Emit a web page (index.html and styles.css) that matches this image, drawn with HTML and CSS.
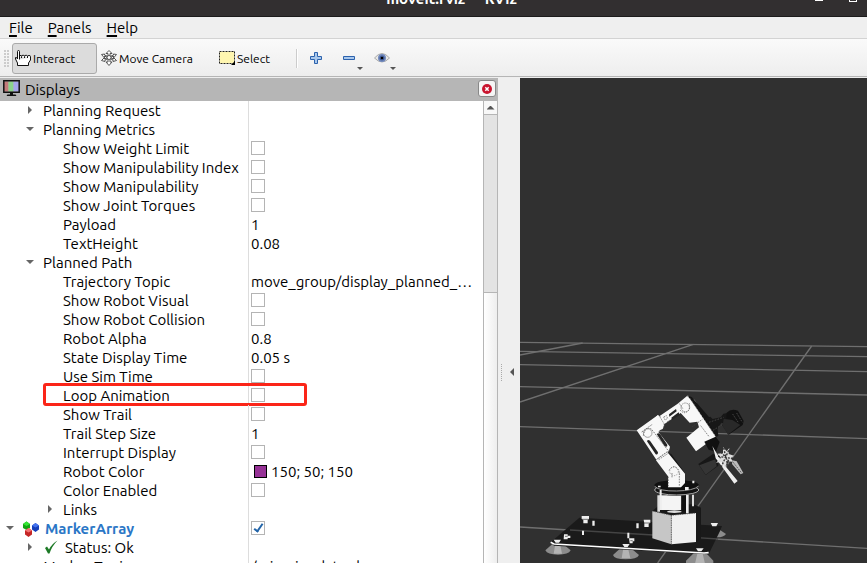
FILE: index.html
```html
<!DOCTYPE html>
<html lang="en">
<head>
    <meta charset="UTF-8">
    <meta name="viewport" content="width=device-width, initial-scale=1.0">
    <title>moveit.rviz* - RViz</title>
    <link rel="stylesheet" href="styles.css">
</head>
<body>
    <div class="window">
        <!-- Title bar -->
        <header class="title-bar">
            <h1 class="title">moveit.rviz* - RViz</h1>
            <button class="window-button minimize" aria-label="Minimize"></button>
            <button class="window-button maximize" aria-label="Maximize"></button>
        </header>

        <!-- Menu -->
        <nav class="menu-bar">
            <button class="menu"><u>F</u>ile</button>
            <button class="menu"><u>P</u>anels</button>
            <button class="menu"><u>H</u>elp</button>
        </nav>

        <!-- Toolbar -->
        <div class="toolbar">
            <span class="grip"></span>
            <button class="tool tool-interact active">
                <svg width="16" height="16" viewBox="0 0 16 16"><path d="M4.500 9.500V1.500q0-1-1-1t-1 1V9L1.500 7.500H.5V9l2 4v2.500h11V13l2-3V6.500q0-1-1.500-1t-1.500 1V8M4.500 5.500q2-.5 2 1V8M6.500 5.500q3-1 3 1V8M9.500 5.500q3-1 3 1V8" fill="#fff" stroke="#111"/></svg>
                <span>Interact</span>
            </button>
            <button class="tool tool-camera">
                <svg width="16" height="16" viewBox="0 0 16 16" fill="#fff" stroke="#555"><path d="M.5 4.500l3-.5v1l9 4V7.500l3 3-3.500 1V10l-8.500-4v2z"/><path d="M15.500 4.500l-3-.5v1l-9 4V7.500l-3 3 3.500 1V10l8.500-4v2z"/><path d="M8 .5L11 3.500H9V12h2l-3 3.500L5 12h2V3.500H5z"/><circle cx="8" cy="7.500" r="2"/></svg>
                <span>Move Camera</span>
            </button>
            <button class="tool tool-select">
                <svg width="16" height="14" viewBox="0 0 16 14"><path d="M.5.5h15v12H.5z" fill="#fff6b0" stroke="#222" stroke-dasharray="2 1"/><path d="M16 10v4h-4z" fill="#000"/></svg>
                <span>Select</span>
            </button>
            <span class="separator"></span>
            <button class="icon-tool" aria-label="Add tool">
                <svg width="12" height="12" viewBox="0 0 12 12"><path d="M4.500.5h3v4h4v3h-4v4h-3v-4h-4v-3h4z" fill="#a9c8ec" stroke="#2c62ad"/></svg>
            </button>
            <button class="icon-tool" aria-label="Remove tool">
                <svg width="12" height="12" viewBox="0 0 12 12"><path d="M.5 4.500h11v3H.5z" fill="#a9c8ec" stroke="#2c62ad"/></svg>
                <span class="drop-arrow"></span>
            </button>
            <button class="icon-tool" aria-label="Tool visibility">
                <svg width="16" height="12" viewBox="0 0 16 12"><path d="M.5 6Q8-3 15.500 6 8 14 .5 6z" fill="#e8e8e6" stroke="#aaa"/><circle cx="8" cy="6" r="4" fill="#7189bd"/><circle cx="8" cy="6" r="2.500" fill="#435d98"/><circle cx="8" cy="6" r="1.300" fill="#000"/></svg>
                <span class="drop-arrow"></span>
            </button>
        </div>

        <div class="workspace">
            <!-- Displays panel -->
            <section class="dock">
                <div class="dock-header">
                    <svg width="17" height="17" viewBox="0 0 17 17"><path d="M1 1.500h4.500v10H1z" fill="#c47b7b"/><path d="M5.500 1.500h5v10h-5z" fill="#8bd38b"/><path d="M10.500 1.500H16v10h-5.500z" fill="#a5a5ea"/><path d="M.8.800h15.400v11.400H.8z" fill="none" stroke="#111" stroke-width="1.500"/><path d="M7 12.500h3v2h2.500l1 1.500h-10l1-1.500H7z" fill="#111"/></svg>
                    <h2 class="dock-title">Displays</h2>
                    <button class="close-button" aria-label="Close">
                        <svg width="10" height="10" viewBox="0 0 10 10"><circle cx="5" cy="5" r="5" fill="#c9142e"/><path d="M3.300 3.300l3.400 3.400M6.700 3.300L3.300 6.700" stroke="#fff" stroke-width="1.500"/></svg>
                    </button>
                </div>
                <div class="tree-area">
                    <div class="tree-scroll">
                        <table class="tree">
                            <colgroup><col class="name-column"><col></colgroup>
                            <tbody>
                                <tr><td class="level-1"><span class="branch closed"></span>Planning Request</td><td></td></tr>
                                <tr><td class="level-1"><span class="branch"></span>Planning Metrics</td><td></td></tr>
                                <tr><td class="level-2"><label for="weight">Show Weight Limit</label></td><td><input type="checkbox" id="weight"></td></tr>
                                <tr><td class="level-2"><label for="manip-index">Show Manipulability Index</label></td><td><input type="checkbox" id="manip-index"></td></tr>
                                <tr><td class="level-2"><label for="manip">Show Manipulability</label></td><td><input type="checkbox" id="manip"></td></tr>
                                <tr><td class="level-2"><label for="torques">Show Joint Torques</label></td><td><input type="checkbox" id="torques"></td></tr>
                                <tr><td class="level-2">Payload</td><td>1</td></tr>
                                <tr><td class="level-2">TextHeight</td><td>0.08</td></tr>
                                <tr><td class="level-1"><span class="branch"></span>Planned Path</td><td></td></tr>
                                <tr><td class="level-2">Trajectory Topic</td><td>move_group/display_planned_…</td></tr>
                                <tr><td class="level-2"><label for="visual">Show Robot Visual</label></td><td><input type="checkbox" id="visual"></td></tr>
                                <tr><td class="level-2"><label for="collision">Show Robot Collision</label></td><td><input type="checkbox" id="collision"></td></tr>
                                <tr><td class="level-2">Robot Alpha</td><td>0.8</td></tr>
                                <tr><td class="level-2">State Display Time</td><td>0.05 s</td></tr>
                                <tr><td class="level-2"><label for="sim-time">Use Sim Time</label></td><td><input type="checkbox" id="sim-time"></td></tr>
                                <tr class="marked"><td class="level-2"><label for="loop">Loop Animation</label></td><td><input type="checkbox" id="loop"></td></tr>
                                <tr><td class="level-2"><label for="trail">Show Trail</label></td><td><input type="checkbox" id="trail"></td></tr>
                                <tr><td class="level-2">Trail Step Size</td><td>1</td></tr>
                                <tr><td class="level-2"><label for="interrupt">Interrupt Display</label></td><td><input type="checkbox" id="interrupt"></td></tr>
                                <tr><td class="level-2">Robot Color</td><td><span class="swatch"></span>150; 50; 150</td></tr>
                                <tr><td class="level-2"><label for="color">Color Enabled</label></td><td><input type="checkbox" id="color"></td></tr>
                                <tr><td class="level-2"><span class="branch closed"></span>Links</td><td></td></tr>
                                <tr>
                                    <td class="level-0"><span class="branch"></span><svg class="row-icon" width="18" height="16" viewBox="0 0 18 16"><path d="M0 3l3.500-2.500L7 3v4L3.500 9 0 7z" fill="#12a512"/><path d="M0 3l3.500-2.500L7 3 3.500 5z" fill="#35e535"/><path d="M9 4.500l3.500-2.500L16 4.500v4l-3.500 2.500L9 8.500z" fill="#173fba"/><path d="M9 4.500l3.500-2.500L16 4.500l-3.500 2z" fill="#4473ef"/><path d="M2 9.500L5.500 7 9 9.500v4L5.500 16 2 13.500z" fill="#c52626"/><path d="M2 9.500L5.500 7 9 9.500l-3.500 2z" fill="#f37373"/></svg><label class="display-name" for="markers">MarkerArray</label></td>
                                    <td><input type="checkbox" id="markers" checked></td>
                                </tr>
                                <tr><td class="level-1"><span class="branch closed"></span><svg class="row-icon status-icon" width="14" height="14" viewBox="0 0 14 14"><path d="M1 8l2-1.500 2 3Q8 3.500 13.500.5 8 6 5.500 13.500H4z" fill="#1d7a26"/></svg>Status: Ok</td><td></td></tr>
                                <tr><td class="level-1">Marker Topic</td><td>/rviz_visual_tools</td></tr>
                            </tbody>
                        </table>
                    </div>
                    <div class="scrollbar">
                        <button class="scroll-up" aria-label="Scroll up"></button>
                        <div class="scroll-trough"></div>
                        <div class="scroll-thumb"></div>
                    </div>
                </div>
            </section>

            <div class="splitter">
                <span class="splitter-grip"></span>
                <span class="splitter-arrow"></span>
            </div>

            <!-- 3D view -->
            <main class="viewport">
                <svg class="scene" viewBox="0 0 1041 1455" preserveAspectRatio="xMinYMin slice" role="img" aria-label="Robot arm on a grid">
                    <g transform="translate(0 756)">
                        <!-- Ground grid -->
                        <g fill="none" stroke="#6f6f6f" stroke-width="4">
                            <path d="M0 37L1041 50M0 64L1041 80M0 104L1041 125M0 170L1041 195M0 290L1041 326M0 591L1041 655"/>
                            <path d="M0 75L188 39M0 216L520 43M875 48L413 699"/>
                        </g>

                        <!-- Suction feet -->
                        <g fill="#8c8c8c">
                            <path d="M98 641h30l24 20q-6 13-38 13t-38-13z"/>
                            <path d="M302 654h30l25 21q-6 13-40 13t-38-13z"/>
                            <path d="M524 667h32l24 25v10h-82v-10z"/>
                            <path d="M600 600l18 12q-8 11-30 10z"/>
                        </g>
                        <g fill="#b4b4b4">
                            <path d="M106 641h14l6 30h-25zM310 654h14l7 31h-26zM533 667h14l8 34h-30z"/>
                        </g>

                        <!-- Base plate -->
                        <path d="M92 637L178 563 606 588 600 603 566 673 102 647z" fill="#1a1a1a"/>
                        <path d="M150 600L400 615M530 623L594 627" stroke="#444" stroke-width="4"/>
                        <path d="M92 637l10 5 450 27 14-1" fill="none" stroke="#fff" stroke-width="5"/>
                        <g fill="#eee">
                            <path d="M185 558h22v9l-4 3v10h-13v-10l-5-3zM371 569h20v9l-5 3v10h-13v-11z"/>
                            <path d="M572 579h22l-5 10h-12zM101 629h22l-6 9h-10zM307 642h22l-6 9h-10zM528 655h23l-7 9h-10z"/>
                            <path d="M217 572h7v15h-7zM349 580h7v15h-7zM186 602h6v13h-6zM322 608h6v17h-6z"/>
                            <path d="M132 613h11v4h8v7h-8v4h-12zM327 625h16v9h-5v6h-9z"/>
                        </g>
                        <path d="M186 568h20M372 579h18M135 619h8M331 632h7" stroke="#333" stroke-width="2"/>

                        <!-- Base block -->
                        <path d="M397 543l24-20h100l22 10v93l-15 8z" fill="#181818"/>
                        <path d="M397 543l57 13v87l-57-18z" fill="#c6c6c6"/>
                        <path d="M454 556l74-7v87l-74 7z" fill="#f0f0f0"/>
                        <path d="M397 543l57 13 74-7M454 556v87" fill="none" stroke="#444" stroke-width="2" stroke-dasharray="4 3"/>
                        <path d="M412 496h8v49h-8zM516 494h6v35h-6z" fill="#ddd"/>
                        <path d="M423 496h61v44h-61z" fill="#f4f4f4"/>
                        <path d="M484 496h16v48h-16z" fill="#111"/>
                        <path d="M498 480h8v70h-8z" fill="#eee"/>
                        <ellipse cx="463" cy="545" rx="22" ry="4" fill="#ddd"/>

                        <!-- Turntable -->
                        <ellipse cx="470" cy="481" rx="67" ry="16" fill="#131313"/>
                        <ellipse cx="470" cy="480" rx="66" ry="15" fill="none" stroke="#aaa" stroke-width="3"/>
                        <ellipse cx="470" cy="466" rx="67" ry="16" fill="#101010"/>
                        <path d="M404 469q15 15 66 14t66-15" fill="none" stroke="#999" stroke-width="3"/>
                        <path d="M414 467h8v5h-8zM517 452h6v8h-6zM495 471h11v9h-11zM419 480h6v60h-6z" fill="#eee"/>

                        <!-- Lower arm -->
                        <path d="M436 366l18 6 40 56v29h-30z" fill="#171717"/>
                        <path d="M408 391l34-25 53 65v28l-12 13h-39v-33z" fill="#f7f7f7"/>
                        <path d="M416 389l30-20M447 421q15-22 29 0l3 12M445 440v31M478 430v39M456 429v16" fill="none" stroke="#555" stroke-width="2" stroke-dasharray="5 3"/>
                        <circle cx="462" cy="424" r="13" fill="none" stroke="#777" stroke-width="2" stroke-dasharray="4 4"/>
                        <path d="M350 301l64-46 17 29-16 22 35 44-3 13-38 26z" fill="#f8f8f8"/>
                        <path d="M381 334q2-7 9-2l24 35q0 9-7 6zM410 312q8-5 12 3l20 29q1 9-8 5z" fill="#252525"/>
                        <path d="M365 306l50-36M370 317q5-27 24-20l50 64M412 386l37-26" fill="none" stroke="#444" stroke-width="2" stroke-dasharray="5 3"/>
                        <circle cx="383" cy="309" r="13" fill="none" stroke="#777" stroke-width="2"/>

                        <!-- Upper arm -->
                        <path d="M420 257l52-35 29-24 23 12 66 109-62 45-29-41 38-31-5-17-23 3-27-29-52 35z" fill="#f8f8f8"/>
                        <path d="M414 255l8 6 11 24-5 12-20 8-15-30z" fill="#f8f8f8"/>
                        <path d="M447 253l21-16 2 7-22 16zM454 263l22-16 3 8-23 15z" fill="#252525"/>
                        <path d="M417 256l15 25v18M431 261l8-4 4 8-8 5zM442 275l8-5M474 215l16 23M480 240q15 17 28-2v-18M517 290l30-22M542 287l26 34" fill="none" stroke="#444" stroke-width="2" stroke-dasharray="4 3"/>
                        <circle cx="496" cy="232" r="13" fill="none" stroke="#666" stroke-width="2" stroke-dasharray="5 2"/>
                        <path d="M501 196l15 6 76 88 3 27-7 5-74-110z" fill="#151515"/>
                        <path d="M503 196l83 122" stroke="#bbb" stroke-width="2" stroke-dasharray="5 5"/>

                        <!-- Camera and gripper -->
                        <path d="M554 265l17-5 7 7 24-5 8-11 17-3 6 20-15 14-14-4-18 27-25-28z" fill="#171717"/>
                        <path d="M567 277l44-15M579 301l39-24" stroke="#444" stroke-width="3" stroke-dasharray="5 4"/>
                        <path d="M620 248q13-14 34-6l17 31-3 12-42 29-19-28 12-18z" fill="#111"/>
                        <path d="M611 266l26 4 24 15-37 29-16-26z" fill="#292929"/>
                        <path d="M638 252l18 27M650 249l17 28" stroke="#444" stroke-width="3" stroke-dasharray="5 3"/>
                        <path d="M553 335l34-15 12 16-11 29-22-6z" fill="#111"/>
                        <path d="M535 402l45-31 15 7v29l-38 28z" fill="#171717"/>
                        <path d="M538 406l48-18 4 21-33 25z" fill="#353535"/>
                        <path d="M577 348l16 27 16 25 44 53-10 8-45-62-11-14-4-18z" fill="#eee"/>
                        <path d="M609 351l11 13 8-10-2 18 16 5-10 8 8 11-18-3-7 21-8-19-19 3 15-15-11-12 17-1z" fill="#ddd"/>
                        <path d="M603 366l31 36M626 361l-24 54M594 379l46 7M611 354l13 55" stroke="#333" stroke-width="4" stroke-dasharray="6 4"/>
                        <path d="M637 391l13 3 20 35-8 4-26-31z" fill="#bbb"/>
                        <path d="M638 395l27 34" stroke="#555" stroke-width="3" stroke-dasharray="4 3"/>
                    </g>
                </svg>
            </main>
        </div>
    </div>
</body>
</html>
```
FILE: styles.css
```css
/* Base */
*,
*::before,
*::after {
    margin: 0;
    padding: 0;
    box-sizing: border-box;
}

body {
    background: #efefef;
    color: #000;
    font-family: Ubuntu, "Noto Sans", "Open Sans", sans-serif;
    font-size: 15px;
    overflow: hidden;
}

button {
    background: none;
    border: none;
    color: inherit;
    font: inherit;
}

svg {
    display: block;
    flex: none;
}

.window {
    display: flex;
    flex-direction: column;
    height: 100vh;
}

/* Title bar */
.title-bar {
    display: flex;
    align-items: flex-end;
    flex: none;
    height: 17px;
    padding: 0 10px 0 88px;
    background: #322f30;
    border-bottom: 1px solid #1c1b1b;
    color: #fff;
    overflow: hidden;
}

.title {
    flex: 1;
    padding-bottom: 7px;
    font-size: 15px;
    line-height: 20px;
    text-align: center;
}

.window-button {
    width: 8px;
    height: 8px;
}

.minimize {
    margin-bottom: 15px;
    border-bottom: 2px solid #fff;
}

.maximize {
    margin: 0 0 14px 26px;
    border: 1px solid #fff;
}

/* Menu */
.menu-bar {
    display: flex;
    flex: none;
    gap: 15px;
    height: 22px;
    padding: 0 9px;
    border-bottom: 1px solid #d3d3d3;
}

.menu {
    line-height: 20px;
}

.menu u {
    text-underline-offset: 2px;
    text-decoration-thickness: 2px;
}

/* Toolbar */
.toolbar {
    display: flex;
    align-items: center;
    flex: none;
    height: 39px;
    padding-left: 4px;
    background: linear-gradient(#fafafa, #ededed);
    border-bottom: 1px solid #eee;
    box-shadow: inset 0 -1px #b5b5b5;
}

.grip {
    width: 5px;
    height: 17px;
    margin-right: 3px;
    background: radial-gradient(circle at 1px 1px, #ccc 1px, transparent 1px) 0 0 / 3px 3px;
}

.tool {
    display: flex;
    align-items: center;
    flex: none;
    gap: 2px;
    height: 31px;
    padding: 0 2px;
    border: 1px solid transparent;
    border-radius: 3px;
    font-size: 12px;
    white-space: nowrap;
}

.tool.active {
    background: #dcdcdc;
    border-color: #aaa;
}

.tool-interact {
    width: 85px;
}

.tool-camera {
    width: 119px;
    padding-left: 3px;
}

.tool-select {
    width: 80px;
}

.separator {
    width: 2px;
    height: 19px;
    margin-right: 1px;
    border-left: 1px solid #ccc;
    border-right: 1px solid #fff;
}

.icon-tool {
    position: relative;
    display: flex;
    align-items: center;
    justify-content: center;
    width: 33px;
    height: 31px;
}

.drop-arrow {
    position: absolute;
    right: 2px;
    bottom: 4px;
    border: 3px solid transparent;
    border-top-color: #555;
    border-bottom: none;
}

/* Displays panel */
.workspace {
    display: flex;
    flex: 1;
    min-height: 0;
}

.dock {
    display: flex;
    flex-direction: column;
    flex: 0 0 498px;
    min-height: 0;
}

.dock-header {
    display: flex;
    align-items: center;
    flex: none;
    gap: 5px;
    height: 23px;
    padding: 0 2px 2px 3px;
    background: #b6b6b6;
}

.dock-title {
    flex: 1;
    padding-top: 2px;
    font-size: 15px;
    font-weight: normal;
    line-height: 21px;
}

.close-button {
    display: flex;
    align-items: center;
    justify-content: center;
    width: 18px;
    height: 17px;
    background: #f5f5f5;
    border: 1px solid #888;
    border-radius: 3px;
}

.tree-area {
    display: flex;
    flex: 1;
    min-height: 0;
    background: #fff;
}

.tree-scroll {
    flex: 1;
    min-width: 0;
    overflow: hidden;
}

.tree {
    width: 100%;
    border-spacing: 0;
    table-layout: fixed;
}

.name-column {
    width: 249px;
}

.tree tr {
    position: relative;
}

.tree td {
    height: 19px;
    padding: 1px 0 0 2px;
    line-height: 18px;
    vertical-align: top;
    white-space: nowrap;
}

.tree td:first-child {
    border-right: 1px solid #ddd;
}

.tree td.level-0 {
    padding-left: 23px;
}

.tree td.level-1 {
    padding-left: 43px;
}

.tree td.level-2 {
    padding-left: 63px;
}

.branch {
    display: inline-block;
    width: 8px;
    height: 4px;
    margin: 0 9px 4px -17px;
    background: #666;
    clip-path: polygon(0 0, 100% 0, 50% 100%);
}

.branch.closed {
    width: 4px;
    height: 8px;
    margin: 0 11px 2px -15px;
    clip-path: polygon(0 0, 100% 50%, 0 100%);
}

.row-icon {
    display: inline-block;
    margin: -4px 4px -4px 0;
    vertical-align: 1px;
}

.status-icon {
    margin: 0 7px 0 1px;
    vertical-align: -1px;
}

.display-name {
    color: #2a76c6;
    font-weight: bold;
}

input[type="checkbox"] {
    display: block;
    width: 14px;
    height: 14px;
    margin-top: 1px;
    appearance: none;
    background: #fff;
    border: 1px solid #b4b4b4;
}

input[type="checkbox"]:checked::before {
    content: "";
    display: block;
    width: 5px;
    height: 10px;
    margin: 0 4px;
    border: solid #2264a8;
    border-width: 0 2px 2px 0;
    transform: rotate(35deg);
}

.swatch {
    display: inline-block;
    width: 13px;
    height: 13px;
    margin: 0 4px 0 3px;
    background: #963296;
    border: 1px solid #000;
    vertical-align: -1px;
}

.marked::after {
    content: "";
    position: absolute;
    top: -3px;
    left: 43px;
    width: 264px;
    height: 23px;
    border: 3px solid #fb2518;
    border-radius: 3px;
    pointer-events: none;
}

/* Scrollbar */
.scrollbar {
    display: flex;
    flex-direction: column;
    flex: none;
    width: 15px;
    border: solid #b5b5b5;
    border-width: 0 1px;
}

.scroll-up {
    height: 14px;
    background: #f8f8f8;
    border-bottom: 1px solid #b5b5b5;
}

.scroll-up::before {
    content: "";
    display: block;
    width: 8px;
    height: 4px;
    margin: 0 auto;
    background: #555;
    clip-path: polygon(50% 0, 100% 100%, 0 100%);
}

.scroll-trough {
    flex: 177;
    background: #e3e3e3;
}

.scroll-thumb {
    flex: 271;
    background: linear-gradient(to right, #fff, #eee);
    border-top: 1px solid #b5b5b5;
}

/* Splitter */
.splitter {
    display: flex;
    align-items: center;
    flex: none;
    gap: 8px;
    width: 22px;
    padding: 103px 0 0 3px;
}

.splitter-grip {
    height: 17px;
    border-left: 1px dotted #aaa;
}

.splitter-arrow {
    border: 4px solid transparent;
    border-right-color: #555;
    border-left: none;
}

/* 3D view */
.viewport {
    flex: 1;
    min-width: 0;
    background: #303030;
    overflow: hidden;
}

.scene {
    width: 100%;
    height: 100%;
}
```
